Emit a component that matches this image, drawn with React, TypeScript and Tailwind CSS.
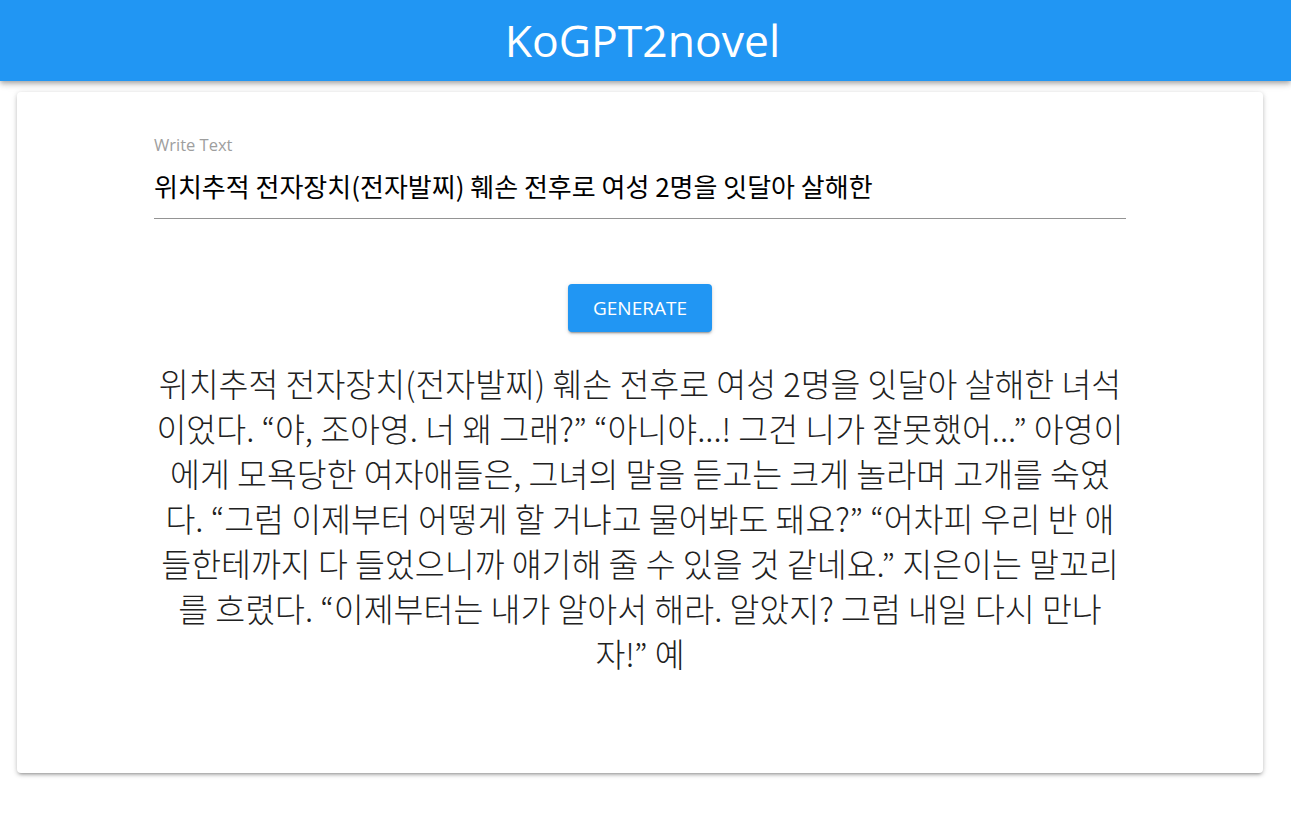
import React from 'react'

const lines = [
    '위치추적 전자장치(전자발찌) 훼손 전후로 여성 2명을 잇달아 살해한 녀석',
    '이었다. “야, 조아영. 너 왜 그래?” “아니야...! 그건 니가 잘못했어...” 아영이',
    '에게 모욕당한 여자애들은, 그녀의 말을 듣고는 크게 놀라며 고개를 숙였',
    '다. “그럼 이제부터 어떻게 할 거냐고 물어봐도 돼요?” “어차피 우리 반 애',
    '들한테까지 다 들었으니까 얘기해 줄 수 있을 것 같네요.” 지은이는 말꼬리',
    '를 흐렸다. “이제부터는 내가 알아서 해라. 알았지? 그럼 내일 다시 만나',
    '자!” 예',
]

export default function App() {
    return (
        <div className="min-h-screen bg-white font-['Open_Sans','Noto_Sans_CJK_KR',sans-serif]">
            <header className="h-[81px] bg-[#2196f3] flex items-center justify-center shadow-[0_2px_4px_-1px_rgba(0,0,0,0.2),0_4px_5px_0_rgba(0,0,0,0.14),0_1px_10px_0_rgba(0,0,0,0.12)]">
                <h1 className="text-white text-[44.5px] leading-none font-normal -ml-[6px]">KoGPT2novel</h1>
            </header>

            <main className="pt-[11px] pl-[17px]">
                <section className="w-[1246px] bg-white rounded px-[137px] pt-[43px] pb-[98px] flex flex-col items-center shadow-[0_3px_3px_-2px_rgba(0,0,0,0.25),0_2px_4px_0_rgba(0,0,0,0.14),0_1px_6px_0_rgba(0,0,0,0.12)]">
                    <div className="w-full">
                        <label className="block text-[16.5px] leading-[19px] text-[#9e9e9e]">Write Text</label>
                        <div className="mt-[14px] pb-[14px] border-b border-[#949494]">
                            <input
                                className="w-full outline-none text-[26px] leading-[36px] h-[36px] text-black font-['Noto_Sans_CJK_KR',sans-serif]"
                                defaultValue="위치추적 전자장치(전자발찌) 훼손 전후로 여성 2명을 잇달아 살해한"
                            />
                        </div>
                    </div>

                    <button className="mt-[65px] w-[144px] h-[48px] rounded bg-[#2196f3] text-white text-[19px] uppercase shadow-[0_3px_1px_-2px_rgba(0,0,0,0.2),0_2px_2px_0_rgba(0,0,0,0.14),0_1px_5px_0_rgba(0,0,0,0.12)]">
                        Generate
                    </button>

                    <p className="mt-[28px] text-center text-[32.5px] leading-[45px] font-light text-[#212121] font-['Noto_Sans_CJK_KR',sans-serif]">
                        {lines.map((l, i) => (
                            <span key={i} className="block whitespace-nowrap">{l}</span>
                        ))}
                    </p>
                </section>
            </main>
        </div>
    )
}
